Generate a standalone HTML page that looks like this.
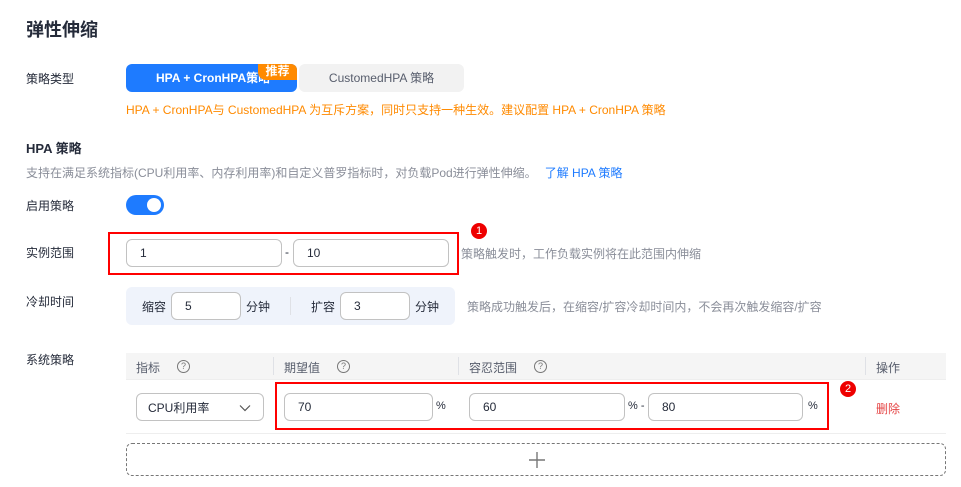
<!DOCTYPE html>
<html><head><meta charset="utf-8"><style>
*{box-sizing:border-box;margin:0;padding:0}
body{width:961px;height:487px;background:#fff;position:relative;overflow:hidden;font-family:"Liberation Sans","Noto Sans CJK SC",sans-serif;font-size:12px;color:#252b3a}
.a{position:absolute;white-space:nowrap}
.lbl{color:#252b3a;font-size:12px}
.in{position:absolute;border:1px solid #c2c2c2;border-radius:6px;background:#fff;font-size:12px;padding-left:13px;display:flex;align-items:center;color:#252b3a}
.gray{color:#8a8e99}
.q{position:absolute;width:13px;height:13px;border:1px solid #777;border-radius:50%;font-size:9px;color:#777;text-align:center;line-height:11px}
.div{position:absolute;width:1px;height:18px;background:#dfe1e6}
.red{position:absolute;border:2.5px solid #f00}
.num{position:absolute;width:16px;height:16px;border-radius:50%;background:#e00;color:#fff;font-size:11px;text-align:center;line-height:16px}
</style></head><body>
<div class="a" style="left:26px;top:16px;font-size:18px;font-weight:bold">弹性伸缩</div>

<div class="a lbl" style="left:26px;top:70px">策略类型</div>
<div class="a" style="left:126px;top:64px;width:171px;height:28px;background:#1e7bff;border-radius:6px;color:#fff;font-weight:bold;font-size:12px;line-height:28px;padding-left:30px">HPA + CronHPA策略</div>
<div class="a" style="left:258px;top:64px;width:39px;height:16px;background:#ff8a00;border-radius:0 6px 0 8px;color:#fff;font-size:12px;font-weight:bold;text-align:center;line-height:15px">推荐</div>
<div class="a" style="left:299px;top:64px;width:165px;height:28px;background:#f2f2f2;border-radius:6px;color:#575d6c;font-size:12px;line-height:28px;text-align:center">CustomedHPA 策略</div>
<div class="a" style="left:126px;top:101px;color:#ff8a00;font-size:12px">HPA + CronHPA与 CustomedHPA 为互斥方案，同时只支持一种生效。建议配置 HPA + CronHPA 策略</div>

<div class="a" style="left:26px;top:138px;font-size:13px;font-weight:bold">HPA 策略</div>
<div class="a gray" style="left:26px;top:164px">支持在满足系统指标(CPU利用率、内存利用率)和自定义普罗指标时，对负载Pod进行弹性伸缩。<span style="color:#1e7bff;margin-left:8px">了解 HPA 策略</span></div>

<div class="a lbl" style="left:26px;top:197px">启用策略</div>
<div class="a" style="left:126px;top:195px;width:38px;height:20px;background:#1e7bff;border-radius:10px"><div style="position:absolute;right:3px;top:3px;width:14px;height:14px;background:#fff;border-radius:50%"></div></div>

<div class="a lbl" style="left:26px;top:244px">实例范围</div>
<div class="red" style="left:108px;top:232px;width:351px;height:43px"></div>
<div class="in" style="left:126px;top:239px;width:156px;height:28px">1</div>
<div class="a" style="left:285px;top:245px">-</div>
<div class="in" style="left:293px;top:239px;width:156px;height:28px">10</div>
<div class="num" style="left:471px;top:223px">1</div>
<div class="a gray" style="left:461px;top:245px">策略触发时，工作负载实例将在此范围内伸缩</div>

<div class="a lbl" style="left:26px;top:293px">冷却时间</div>
<div class="a" style="left:126px;top:287px;width:329px;height:38px;background:#eff3fb;border-radius:6px"></div>
<div class="a" style="left:142px;top:298px">缩容</div>
<div class="in" style="left:171px;top:292px;width:70px;height:28px">5</div>
<div class="a" style="left:246px;top:298px">分钟</div>
<div class="div" style="left:290px;top:297px"></div>
<div class="a" style="left:311px;top:298px">扩容</div>
<div class="in" style="left:340px;top:292px;width:70px;height:28px">3</div>
<div class="a" style="left:415px;top:298px">分钟</div>
<div class="a gray" style="left:467px;top:298px">策略成功触发后，在缩容/扩容冷却时间内，不会再次触发缩容/扩容</div>

<div class="a lbl" style="left:26px;top:351px">系统策略</div>
<div class="a" style="left:126px;top:353px;width:820px;height:27px;background:#f5f5f5;border-bottom:1px solid #eee"></div>
<div class="a" style="left:136px;top:359px;color:#575d6c">指标</div><div class="q" style="left:177px;top:360px">?</div>
<div class="div" style="left:273px;top:357px"></div>
<div class="a" style="left:284px;top:359px;color:#575d6c">期望值</div><div class="q" style="left:337px;top:360px">?</div>
<div class="div" style="left:458px;top:357px"></div>
<div class="a" style="left:469px;top:359px;color:#575d6c">容忍范围</div><div class="q" style="left:534px;top:360px">?</div>
<div class="div" style="left:865px;top:357px"></div>
<div class="a" style="left:876px;top:359px;color:#575d6c">操作</div>

<div class="in" style="left:136px;top:393px;width:128px;height:28px;padding-left:11px">CPU利用率
<svg style="position:absolute;right:12px;top:10px" width="12" height="8" viewBox="0 0 12 8"><path d="M1 1.5L6 6.5L11 1.5" fill="none" stroke="#555" stroke-width="1.2"/></svg></div>
<div class="red" style="left:275px;top:382px;width:554px;height:48px"></div>
<div class="in" style="left:284px;top:393px;width:149px;height:28px">70</div>
<div class="a" style="left:436px;top:400px;font-size:11px">%</div>
<div class="in" style="left:469px;top:393px;width:156px;height:28px">60</div>
<div class="a" style="left:628px;top:400px;font-size:11px">% -</div>
<div class="in" style="left:648px;top:393px;width:155px;height:28px">80</div>
<div class="a" style="left:808px;top:400px;font-size:11px">%</div>
<div class="num" style="left:840px;top:381px">2</div>
<div class="a" style="left:876px;top:400px;color:#e54545">删除</div>
<div class="a" style="left:126px;top:433px;width:820px;height:1px;background:#eee"></div>

<div class="a" style="left:126px;top:443px;width:820px;height:33px;border:1px dashed #777;border-radius:6px"></div>
<svg class="a" style="left:528px;top:451px" width="18" height="18" viewBox="0 0 18 18"><path d="M9 1V17M1 9H17" stroke="#777" stroke-width="1.4"/></svg>
</body></html>
